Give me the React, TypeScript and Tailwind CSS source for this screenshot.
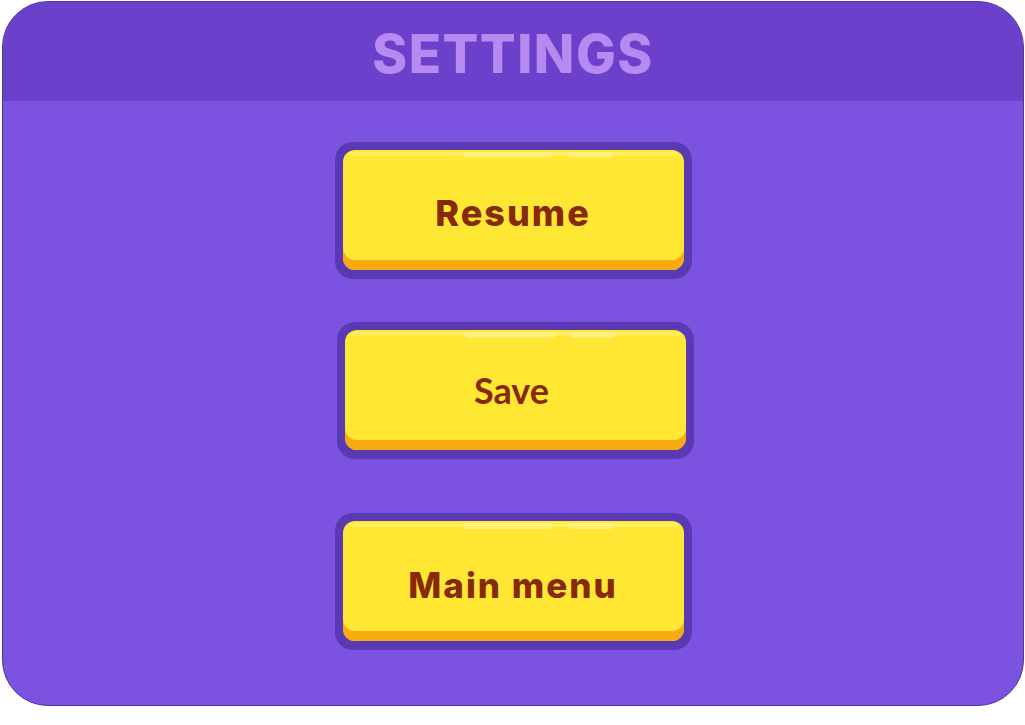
import React from "react";

function GameButton({
  label,
  className,
  textClass,
}: {
  label: string;
  className: string;
  textClass: string;
}) {
  return (
    <div className={`rounded-[18px] bg-[#5a3ab3] p-[8px] pb-[9px] ${className}`}>
      <div className="relative flex h-[120px] w-[341px] items-center justify-center overflow-hidden rounded-[12px] bg-[#ffe734] shadow-[inset_0_-10px_0_#f8ab0f]">
        <div className="absolute left-[6px] right-[6px] top-[2px] h-[4px] rounded-full bg-[#fff06a] opacity-80" />
        <div className="absolute left-[120px] top-[2px] h-[6px] w-[90px] rounded-full bg-[#fff38a] opacity-70" />
        <div className="absolute left-[225px] top-[2px] h-[6px] w-[45px] rounded-full bg-[#fff38a] opacity-70" />
        <span className={`relative text-[#872a0b] ${textClass}`}>{label}</span>
      </div>
    </div>
  );
}

export default function App() {
  return (
    <div className="h-[725px] w-[1025px] bg-white">
      <div className="ml-[2px] mt-[1px] flex h-[705px] w-[1022px] flex-col overflow-hidden rounded-[46px] border border-[#553599] bg-[#7c53e0]">
        <div className="flex h-[99px] items-center justify-center bg-[#6b41cc]">
          <span
            className="mt-[5px] text-[53px] font-extrabold leading-none tracking-[1.5px] text-[#b68af1]"
            style={{ fontFamily: "Inter, 'Noto Sans', sans-serif" }}
          >
            SETTINGS
          </span>
        </div>
        <div className="flex flex-col items-center pt-[41px]">
          <GameButton
            label="Resume"
            className="ml-[0px]"
            textClass="mt-[5px] text-[36px] font-extrabold tracking-[2px] font-['Inter',sans-serif]"
          />
          <GameButton
            label="Save"
            className="mt-[43px] ml-[5px]"
            textClass="mt-[0px] mr-[8px] text-[36px] font-bold font-['Lato',sans-serif]"
          />
          <GameButton
            label="Main menu"
            className="mt-[54px] ml-[0px]"
            textClass="mt-[8px] text-[35px] font-extrabold tracking-[2px] font-['Inter',sans-serif]"
          />
        </div>
      </div>
    </div>
  );
}
